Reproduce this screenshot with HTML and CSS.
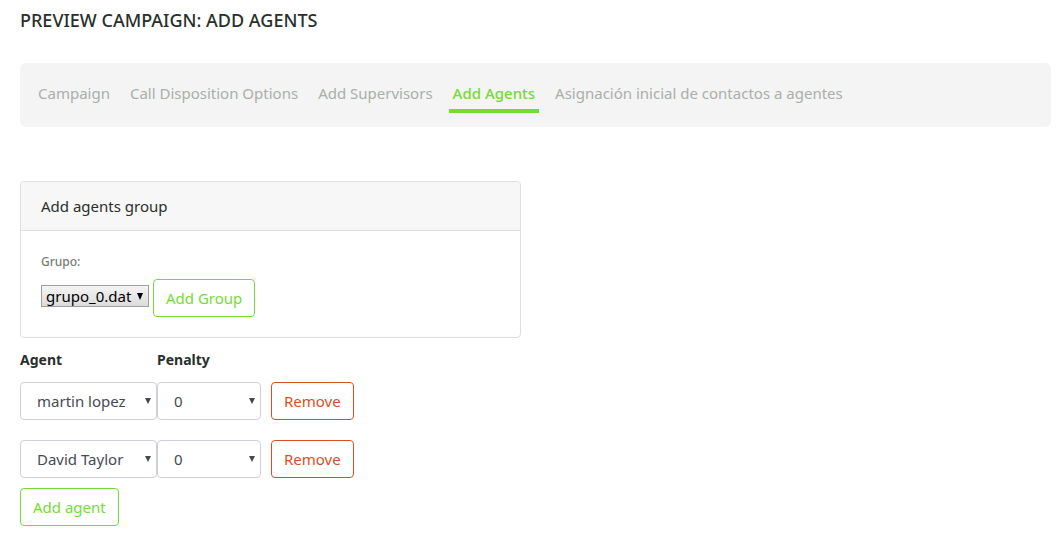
FILE: index.html
```html
<!DOCTYPE html>
<html lang="en">
<head>
<meta charset="utf-8">
<title>Preview Campaign: Add Agents</title>
<link rel="stylesheet" href="styles.css">
</head>
<body>
<main class="page">
  <h1 class="title">PREVIEW CAMPAIGN: ADD AGENTS</h1>
  <nav class="steps">
    <a class="step" href="#campaign">Campaign</a>
    <a class="step" href="#dispositions">Call Disposition Options</a>
    <a class="step" href="#supervisors">Add Supervisors</a>
    <a class="step step-active" href="#agents" aria-current="step">Add Agents</a>
    <a class="step" href="#assignment">Asignación inicial de contactos a agentes</a>
  </nav>
  <section class="card">
    <h2 class="card-header">Add agents group</h2>
    <form class="card-body">
      <label class="group-label" for="group">Grupo:</label>
      <div class="group-row">
        <select class="group-select" id="group"><option>grupo_0.dat</option></select>
        <button class="btn btn-add" type="button">Add Group</button>
      </div>
    </form>
  </section>
  <form class="agents">
    <table class="agents-table">
      <thead>
        <tr><th class="col-agent" scope="col">Agent</th><th class="col-penalty" scope="col">Penalty</th><td></td></tr>
      </thead>
      <tbody>
        <tr>
          <td><select class="field" aria-label="Agent"><option>martin lopez</option></select></td>
          <td><select class="field" aria-label="Penalty"><option>0</option></select></td>
          <td class="col-action"><button class="btn btn-remove" type="button">Remove</button></td>
        </tr>
        <tr>
          <td><select class="field" aria-label="Agent"><option>David Taylor</option></select></td>
          <td><select class="field" aria-label="Penalty"><option>0</option></select></td>
          <td class="col-action"><button class="btn btn-remove" type="button">Remove</button></td>
        </tr>
      </tbody>
    </table>
    <button class="btn btn-add" type="button">Add agent</button>
  </form>
</main>
</body>
</html>
```
FILE: styles.css
```css
* {
  box-sizing: border-box;
}

body {
  margin: 0;
  background: #fff;
  color: #29302c;
  font: 15px/24px "Noto Sans", Roboto, sans-serif;
}

button,
select {
  font: inherit;
}

.page {
  padding: 8px 9px 8px 20px;
}

.title {
  margin: 0 0 31px;
  font-size: 18px;
  font-weight: 500;
  line-height: 24px;
}

.steps {
  display: flex;
  flex-wrap: wrap;
  gap: 12px;
  margin-bottom: 54px;
  padding: 14px;
  border-radius: 6px;
  background: #f4f4f4;
}

.step {
  padding: 4px 4px;
  border-bottom: 4px solid transparent;
  color: #a9afa9;
  text-decoration: none;
}

.step-active {
  border-color: #75dc35;
  color: #75dc35;
  font-weight: 500;
}

.card {
  max-width: 501px;
  border: 1px solid #dfdfdf;
  border-radius: 4px;
}

.card-header {
  margin: 0;
  padding: 12px 20px;
  border-bottom: 1px solid #dfdfdf;
  border-radius: 3px 3px 0 0;
  background: #f7f7f7;
  font-size: 15px;
  font-weight: 400;
}

.card-body {
  padding: 20px;
}

.group-label {
  display: block;
  margin-bottom: 6px;
  color: #767c76;
  font-size: 12px;
  font-weight: 500;
  line-height: 22px;
}

.group-row {
  display: flex;
  align-items: center;
  gap: 4px;
}

.group-select,
.field {
  appearance: none;
  background-repeat: no-repeat;
}

.group-select {
  width: 108px;
  height: 22px;
  margin-bottom: 4px;
  padding: 0 16px 0 4px;
  border: 1px solid #a0a0a0;
  border-radius: 0;
  background-color: #e6e6e6;
  background-image: url("data:image/svg+xml,%3Csvg xmlns='http://www.w3.org/2000/svg' width='6' height='7'%3E%3Cpath d='M0 0h6L3 7z' fill='%23000'/%3E%3C/svg%3E"), linear-gradient(#f4f4f4, #dcdcdc);
  background-position: right 5px top 7px, 0 0;
  color: #000;
  line-height: 20px;
}

.btn {
  height: 38px;
  padding: 0 12px;
  border: 1px solid;
  border-radius: 4px;
  background: #fff;
}

.btn-add {
  color: #75dc35;
}

.btn-remove {
  color: #d9501e;
}

.agents {
  padding-top: 10px;
}

.agents-table {
  border-spacing: 0;
  margin-bottom: 10px;
}

.agents-table th,
.agents-table td {
  padding: 0;
  text-align: left;
}

.agents-table th {
  font-size: 14px;
}

.agents-table tbody td {
  padding-top: 20px;
}

.agents-table tbody tr:first-child td {
  padding-top: 10px;
}

.col-agent {
  width: 137px;
}

.col-penalty {
  width: 104px;
}

.agents-table .col-action {
  padding-left: 10px;
}

.field {
  display: block;
  width: 100%;
  height: 38px;
  padding: 0 16px;
  border: 1px solid #ced0da;
  border-radius: 4px;
  background-color: #fff;
  background-image: url("data:image/svg+xml,%3Csvg xmlns='http://www.w3.org/2000/svg' width='6' height='6'%3E%3Cpath d='M0 0h6L3 6z' fill='%23464a4c'/%3E%3C/svg%3E");
  background-position: right 5px center;
  color: #464a54;
}
```
